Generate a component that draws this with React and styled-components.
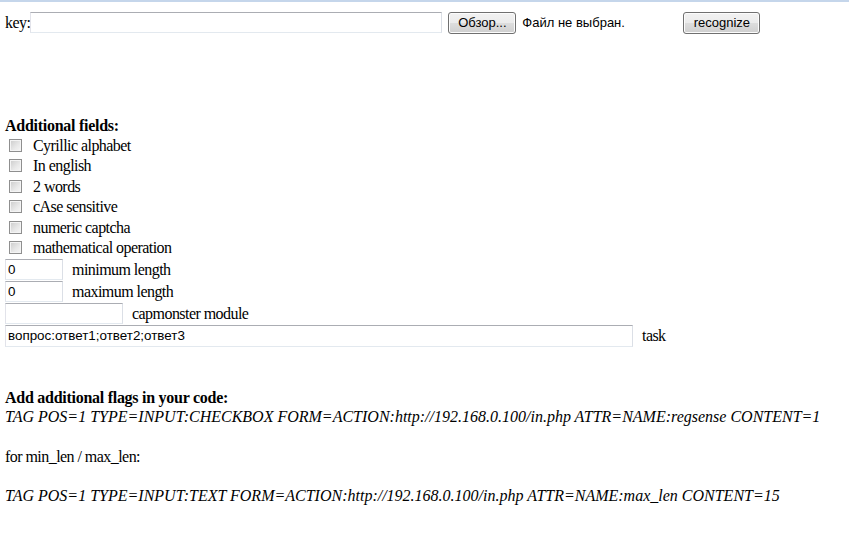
import React from "react";
import styled, { createGlobalStyle } from "styled-components";

const GlobalStyle = createGlobalStyle`
  html, body {
    margin: 0;
    padding: 0;
    background: #fff;
  }
  body {
    font-family: "Liberation Serif", "Times New Roman", serif;
    font-size: 16px;
    letter-spacing: -0.55px;
    color: #000;
  }
`;

const Page = styled.div`
  border-top: 2px solid #c5d6eb;
  padding: 0 5px;
  min-height: 549px;
  box-sizing: border-box;
`;

const TopRow = styled.div`
  display: flex;
  align-items: center;
  height: 21px;
  margin-top: 10px;
`;

const TextInput = styled.input`
  box-sizing: border-box;
  width: ${(p) => p.$w}px;
  height: ${(p) => p.$h || 21}px;
  margin: 0;
  padding: 0 2px;
  border: 1px solid;
  border-color: #abadb3 #dbdfe6 #e3e9ef #e2e3ea;
  font-family: "Liberation Sans", Arial, sans-serif;
  font-size: 13.4px;
  letter-spacing: 0;
  color: #000;
  background: #fff;
  outline: none;
`;

const WinButton = styled.button`
  box-sizing: border-box;
  width: ${(p) => p.$w}px;
  height: 22px;
  margin: 0;
  padding: 0;
  border: 1px solid #707070;
  border-radius: 3px;
  background: linear-gradient(#f2f2f2 0%, #ebebeb 50%, #dddddd 51%, #cfcfcf 100%);
  box-shadow: inset 0 0 0 1px #fcfcfc;
  font-family: "Liberation Sans", Arial, sans-serif;
  font-size: 13px;
  letter-spacing: 0;
  color: #000;
`;

const FileGroup = styled.div`
  display: flex;
  align-items: center;
  gap: 6px;
  width: 235px;
  margin-left: 6px;
`;

const FileStatus = styled.span`
  font-family: "Liberation Sans", Arial, sans-serif;
  font-size: 13px;
  letter-spacing: 0;
`;

const Fields = styled.div`
  margin-top: 83px;
`;

const Heading = styled.div`
  font-weight: bold;
  letter-spacing: -0.27px;
  line-height: 19.6px;
  margin-bottom: ${(p) => p.$after || 0}px;
`;

const CheckRow = styled.label`
  display: flex;
  align-items: flex-start;
  height: 20.55px;
  line-height: 20px;
`;

const Check = styled.input.attrs({ type: "checkbox" })`
  appearance: none;
  box-sizing: border-box;
  width: 13px;
  height: 13px;
  margin: 3px 11px 0 4px;
  border: 1px solid #8f8f8f;
  background: linear-gradient(135deg, #cbcbcb 0%, #e9e9e9 60%, #f6f6f6 100%);
  box-shadow: inset 0 0 0 1px #f4f4f4;
`;

const InputRow = styled.div`
  display: flex;
  align-items: center;
  gap: 9px;
  height: 22px;
`;

const Flags = styled.div`
  margin-top: 41px;
  line-height: 19.6px;
`;

const Code = styled.div`
  font-style: italic;
  letter-spacing: 0;
`;

const Blank = styled.div`
  height: 19.6px;
`;

const checks = [
  "Cyrillic alphabet",
  "In english",
  "2 words",
  "cAse sensitive",
  "numeric captcha",
  "mathematical operation",
];

export default function App() {
  return (
    <>
      <GlobalStyle />
      <Page>
        <TopRow>
          <span>key:</span>
          <TextInput $w={412} />
          <FileGroup>
            <WinButton $w={68}>Обзор...</WinButton>
            <FileStatus>Файл не выбран.</FileStatus>
          </FileGroup>
          <WinButton $w={77}>recognize</WinButton>
        </TopRow>

        <Fields>
          <Heading>Additional fields:</Heading>
          {checks.map((c) => (
            <CheckRow key={c}>
              <Check />
              <span>{c}</span>
            </CheckRow>
          ))}
          <InputRow>
            <TextInput $w={58} defaultValue="0" />
            <span>minimum length</span>
          </InputRow>
          <InputRow>
            <TextInput $w={58} defaultValue="0" />
            <span>maximum length</span>
          </InputRow>
          <InputRow>
            <TextInput $w={118} />
            <span>capmonster module</span>
          </InputRow>
          <InputRow>
            <TextInput $w={628} $h={22} defaultValue="вопрос:ответ1;ответ2;ответ3" />
            <span>task</span>
          </InputRow>
        </Fields>

        <Flags>
          <Heading>Add additional flags in your code:</Heading>
          <Code>
            TAG POS=1 TYPE=INPUT:CHECKBOX FORM=ACTION:http://192.168.0.100/in.php ATTR=NAME:regsense CONTENT=1
          </Code>
          <Blank />
          <div>for min_len / max_len:</div>
          <Blank />
          <Code>
            TAG POS=1 TYPE=INPUT:TEXT FORM=ACTION:http://192.168.0.100/in.php ATTR=NAME:max_len CONTENT=15
          </Code>
        </Flags>
      </Page>
    </>
  );
}
